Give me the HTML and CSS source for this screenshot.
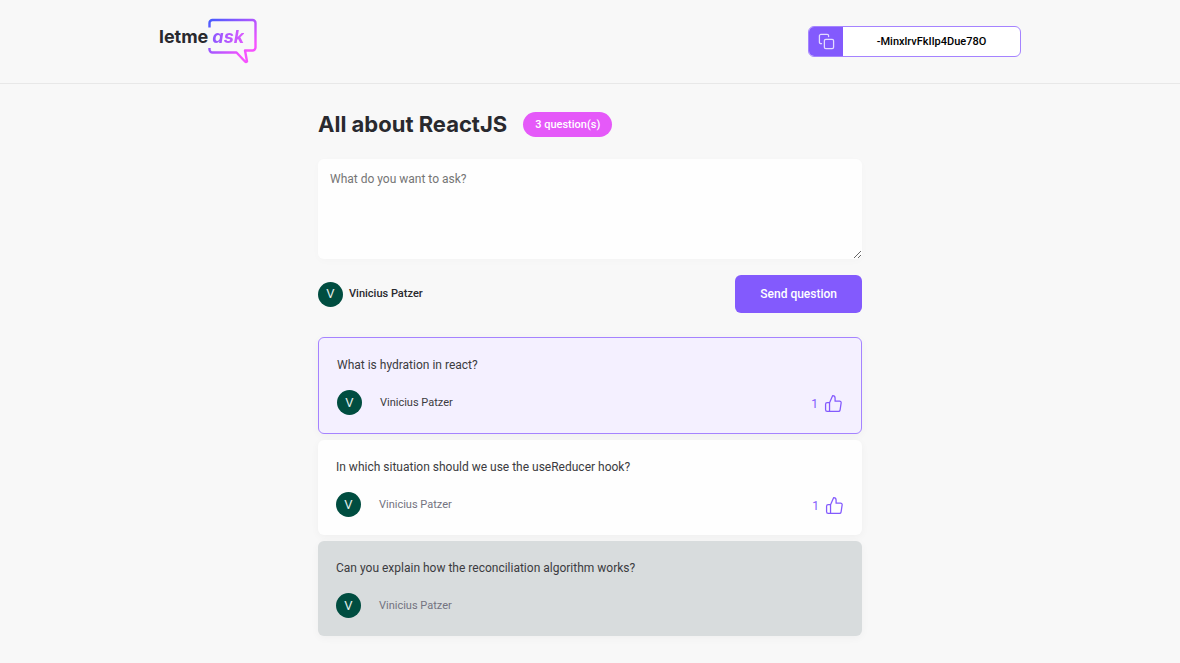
FILE: index.html
```html
<!DOCTYPE html>
<html lang="en">
<head>
<meta charset="utf-8">
<meta name="viewport" content="width=device-width, initial-scale=1">
<title>All about ReactJS - Letmeask</title>
<link rel="stylesheet" href="styles.css">
</head>
<body>
<header class="header">
  <div class="header-content">
    <a class="logo" href="#" aria-label="letme ask">
      <svg class="logo-bubble" viewBox="0 0 49 47" fill="none" aria-hidden="true">
        <defs>
          <linearGradient id="bubble" x1="2" y1="2" x2="32" y2="38" gradientUnits="userSpaceOnUse">
            <stop stop-color="#485bff"/>
            <stop offset="1" stop-color="#f653ff"/>
          </linearGradient>
        </defs>
        <path d="M1.500 9.500V5a3 3 0 0 1 3-3H44.500a3 3 0 0 1 3 3V29.500a3 3 0 0 1-3 3H37l2 11q-1 1-2 0L28.500 34.500H4.500a3 3 0 0 1-3-3V30" stroke="url(#bubble)" stroke-width="2.400" stroke-linejoin="round"/>
      </svg>
      <span class="logo-letme">letme</span>
      <span class="logo-ask">ask</span>
    </a>
    <button class="room-code" type="button">
      <span class="room-icon">
        <svg width="17" height="17" viewBox="0 0 24 24" fill="none" stroke="currentColor" stroke-width="1.800" stroke-linecap="round" stroke-linejoin="round" aria-hidden="true">
          <rect x="9" y="9" width="13" height="13" rx="2"/>
          <path d="M5 15H4a2 2 0 0 1-2-2V4a2 2 0 0 1 2-2h9a2 2 0 0 1 2 2v1"/>
        </svg>
      </span>
      <span class="room-id">-MinxlrvFkIlp4Due78O</span>
    </button>
  </div>
</header>
<main class="main">
  <div class="room-title">
    <h1>All about ReactJS</h1>
    <span class="count">3 question(s)</span>
  </div>
  <form class="ask-form">
    <textarea class="ask-input" placeholder="What do you want to ask?" aria-label="Your question"></textarea>
    <div class="form-footer">
      <div class="user">
        <span class="avatar" aria-hidden="true">V</span>
        <span class="user-name">Vinicius Patzer</span>
      </div>
      <button class="send" type="button">Send question</button>
    </div>
  </form>
  <div class="questions">
    <article class="question highlighted">
      <p>What is hydration in react?</p>
      <footer class="question-footer">
        <div class="author">
          <span class="avatar" aria-hidden="true">V</span>
          <span class="author-name">Vinicius Patzer</span>
        </div>
        <button class="like" type="button" aria-label="1 like">
          <span>1</span>
          <svg width="19" height="19" viewBox="0 0 24 24" fill="none" stroke="currentColor" stroke-width="1.600" stroke-linecap="round" stroke-linejoin="round" aria-hidden="true">
            <path d="M7 22H4a2 2 0 0 1-2-2v-7a2 2 0 0 1 2-2h3m7-2V5a3 3 0 0 0-3-3l-4 9v11h11.280a2 2 0 0 0 2-1.700l1.380-9a2 2 0 0 0-2-2.300H14z"/>
          </svg>
        </button>
      </footer>
    </article>
    <article class="question">
      <p>In which situation should we use the useReducer hook?</p>
      <footer class="question-footer">
        <div class="author">
          <span class="avatar" aria-hidden="true">V</span>
          <span class="author-name">Vinicius Patzer</span>
        </div>
        <button class="like" type="button" aria-label="1 like">
          <span>1</span>
          <svg width="19" height="19" viewBox="0 0 24 24" fill="none" stroke="currentColor" stroke-width="1.600" stroke-linecap="round" stroke-linejoin="round" aria-hidden="true">
            <path d="M7 22H4a2 2 0 0 1-2-2v-7a2 2 0 0 1 2-2h3m7-2V5a3 3 0 0 0-3-3l-4 9v11h11.280a2 2 0 0 0 2-1.700l1.380-9a2 2 0 0 0-2-2.300H14z"/>
          </svg>
        </button>
      </footer>
    </article>
    <article class="question answered">
      <p>Can you explain how the reconciliation algorithm works?</p>
      <footer class="question-footer">
        <div class="author">
          <span class="avatar" aria-hidden="true">V</span>
          <span class="author-name">Vinicius Patzer</span>
        </div>
      </footer>
    </article>
  </div>
</main>
</body>
</html>
```

FILE: styles.css
```css
* {
  box-sizing: border-box;
  margin: 0;
  padding: 0;
}

body {
  background: #f8f8f8;
  color: #29292e;
  font: 400 12px/18px Roboto, sans-serif;
}

button,
textarea {
  font: inherit;
}

button {
  cursor: pointer;
}

.header {
  padding: 18px 24px;
  border-bottom: 1px solid #e8e8e8;
}

.header-content {
  display: flex;
  align-items: center;
  justify-content: space-between;
  max-width: 862px;
  margin: 0 auto;
}

.logo {
  position: relative;
  display: flex;
  gap: 4px;
  width: 98px;
  height: 47px;
  padding-top: 8px;
  color: #29292e;
  font: 700 18px/22px Inter, sans-serif;
  text-decoration: none;
}

.logo-bubble {
  position: absolute;
  top: 0;
  right: 0;
  width: 49px;
  height: 47px;
}

.logo-ask {
  background: linear-gradient(100deg, #8757ff, #e85aff);
  background-clip: text;
  color: transparent;
  font-style: italic;
}

.room-code {
  display: flex;
  width: 213px;
  height: 31px;
  overflow: hidden;
  border: 1px solid #a583ff;
  border-radius: 6px;
  background: #fff;
  color: #000;
}

.room-icon {
  display: grid;
  place-items: center;
  width: 34px;
  height: 100%;
  background: #835afd;
  color: #e4dbff;
}

.room-id {
  flex: 1;
  align-self: center;
  font-size: 11px;
  font-weight: 500;
  text-align: center;
}

.main {
  max-width: 544px;
  margin: 0 auto;
  padding-bottom: 24px;
}

.room-title {
  display: flex;
  align-items: center;
  gap: 16px;
  margin: 24px 0 19px;
}

.room-title h1 {
  font: 700 22px/32px Inter, sans-serif;
}

.count {
  padding: 4px 12px 3px;
  border-radius: 16px;
  background: #e559f9;
  color: #fff;
  font-size: 11px;
  font-weight: 500;
}

.ask-input {
  display: block;
  width: 100%;
  height: 100px;
  padding: 11px 12px;
  border: 0;
  border-radius: 6px;
  background: #fefefe;
  box-shadow: 0 2px 9px rgba(0, 0, 0, 0.02);
  resize: vertical;
}

.form-footer {
  display: flex;
  align-items: center;
  justify-content: space-between;
  margin-top: 16px;
}

.user,
.author {
  display: flex;
  align-items: center;
}

.user {
  gap: 6px;
}

.author {
  gap: 18px;
}

.avatar {
  display: grid;
  place-items: center;
  width: 25px;
  height: 25px;
  border-radius: 50%;
  background: #004d40;
  color: #e0eeeb;
  font-size: 13px;
}

.user-name {
  font-size: 11px;
  font-weight: 500;
}

.send {
  height: 38px;
  padding: 0 25px;
  border: 0;
  border-radius: 6px;
  background: #835afd;
  color: #fff;
  font-weight: 500;
}

.questions {
  display: grid;
  gap: 6px;
  margin-top: 24px;
}

.question {
  padding: 18px;
  border-radius: 6px;
  background: #fefefe;
  box-shadow: 0 2px 9px rgba(0, 0, 0, 0.04);
}

.question p {
  color: #3b3b40;
}

.question-footer {
  display: flex;
  align-items: center;
  justify-content: space-between;
  margin-top: 16px;
}

.author-name {
  color: #737380;
  font-size: 11px;
}

.like {
  display: flex;
  align-items: center;
  gap: 6px;
  padding-top: 2px;
  border: 0;
  background: transparent;
  color: #835afd;
}

.highlighted {
  border: 1px solid #a583ff;
  background: #f4f0ff;
}

.highlighted .author-name {
  color: #3b3b40;
}

.answered {
  background: #d8dcdd;
}
```
